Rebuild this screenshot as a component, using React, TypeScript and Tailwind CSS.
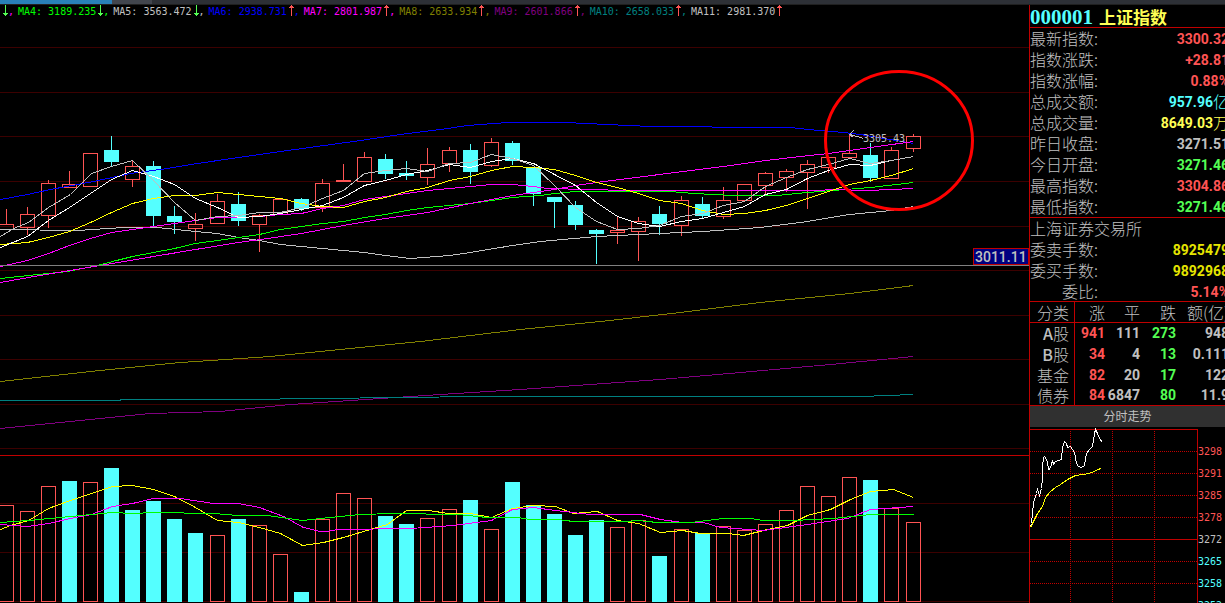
import clsx from "clsx";

type Candle = {
  x: number;
  high: number;
  top: number;
  bottom: number;
  low: number;
  down: boolean;
  volume: number;
};

// x, high, body top, body bottom, low, down day, top of the volume bar
const ROWS: [number, number, number, number, number, 0 | 1, number][] = [
  [6, 209, 224, 229, 229, 0, 505],
  [27, 207, 214, 227, 235, 0, 511],
  [48, 180, 183, 215, 228, 0, 486],
  [69, 171, 184, 187, 187, 0, 481],
  [90, 153, 153, 186, 186, 0, 482],
  [111, 136, 150, 161, 166, 1, 468],
  [132, 161, 166, 179, 187, 0, 510],
  [153, 161, 166, 215, 226, 1, 501],
  [174, 206, 216, 221, 234, 1, 519],
  [195, 213, 224, 228, 241, 0, 533],
  [217, 194, 201, 223, 223, 0, 535],
  [238, 192, 204, 220, 226, 1, 519],
  [259, 214, 215, 224, 252, 0, 525],
  [280, 199, 199, 214, 214, 0, 554],
  [301, 198, 199, 208, 211, 1, 592],
  [322, 179, 183, 207, 212, 0, 519],
  [343, 164, 180, 181, 181, 0, 493],
  [364, 152, 157, 181, 181, 0, 498],
  [385, 154, 159, 173, 179, 1, 516],
  [406, 161, 173, 175, 180, 1, 524],
  [427, 148, 164, 177, 185, 0, 518],
  [449, 147, 150, 163, 172, 0, 509],
  [470, 144, 150, 171, 184, 1, 500],
  [491, 138, 142, 165, 167, 0, 529],
  [512, 141, 143, 160, 165, 1, 482],
  [533, 167, 167, 193, 206, 1, 505],
  [554, 197, 197, 201, 228, 1, 514],
  [575, 201, 205, 224, 230, 1, 535],
  [596, 229, 230, 233, 264, 1, 520],
  [617, 216, 230, 232, 244, 0, 527],
  [638, 217, 221, 231, 261, 0, 520],
  [659, 206, 214, 223, 235, 1, 556],
  [681, 196, 200, 225, 236, 0, 529],
  [702, 197, 204, 215, 218, 1, 533],
  [723, 187, 200, 216, 219, 0, 526],
  [744, 184, 184, 200, 200, 0, 530],
  [765, 172, 173, 185, 194, 0, 524],
  [786, 169, 171, 177, 192, 0, 510],
  [807, 160, 164, 172, 209, 0, 486],
  [828, 157, 157, 167, 173, 0, 496],
  [849, 134, 153, 157, 157, 0, 477],
  [870, 143, 155, 177, 182, 1, 480],
  [891, 147, 150, 178, 178, 0, 508],
  [913, 134, 136, 148, 152, 0, 522],
];

// volume bars that are filled although the day closed up
const FILLED_VOLUME = [69, 132, 195];

const CANDLES: Candle[] = ROWS.map(([x, high, top, bottom, low, down, volume]) => ({
  x,
  high,
  top,
  bottom,
  low,
  down: down === 1,
  volume,
}));

const UP = "#ff5454";
const DOWN = "#54ffff";
const GRID = "#3c0000";
const FRAME = "#c00000";

const PRICE_LINES = [
  {
    color: "#808000",
    points:
      "0,381 90,371 180,362 270,356 380,345 420,341 520,329 600,321 680,312 760,302 850,293 913,285",
  },
  {
    color: "#800080",
    points:
      "0,428 80,420 150,413 220,411 290,404 380,398 440,394 520,389 590,384 660,379 740,372 830,364 913,356",
  },
  { color: "#008080", points: "0,400 240,399 320,398 480,396 640,396 860,396 913,394" },
  {
    color: "#c0c0c0",
    points:
      "0,229 77,230 123,227 157,227 195,231 217,233 238,237 259,240 280,244 322,248 364,252 385,255 410,258 449,255 470,252 512,245 540,241 596,236 638,234 702,231 760,227 807,221 849,214 891,210 913,206",
  },
  {
    color: "#0000ff",
    points:
      "0,199 27,194 50,189 93,181 130,173 167,168 197,163 238,157 280,151 360,140 400,134 440,129 467,125 507,122 565,122 607,124 650,126 690,126 733,127 790,127 808,129 843,132 860,134 913,143",
  },
  {
    color: "#00ff00",
    points:
      "0,278 28,275 67,271 97,265 112,261 132,256 153,252 174,248 195,243 217,240 259,234 280,229 301,226 322,223 343,221 364,217 385,214 406,210 427,207 470,203 512,197 540,195 554,193 575,191 670,191 693,193 733,195 777,195 807,192 870,187 913,182",
  },
  {
    color: "#ff00ff",
    points:
      "0,282 28,277 70,270 112,263 153,256 195,249 238,242 260,239 301,233 343,225 385,218 427,212 470,203 512,195 540,191 554,189 575,185 596,182 659,174 723,166 765,160 800,156 828,153 870,147 913,141",
  },
  {
    color: "#ff00ff",
    points:
      "0,266 27,260 48,253 69,245 90,238 111,232 132,229 153,226 174,223 195,220 217,217 238,217 259,216 280,214 301,213 322,208 343,205 364,199 385,196 406,193 427,190 449,188 470,186 491,184 512,184 533,186 547,188 587,189 627,190 817,190 833,189 867,190 913,188",
  },
  {
    color: "#ffff00",
    points:
      "0,244 27,242 48,237 69,231 90,222 111,212 132,203 153,198 174,195 195,195 217,192 238,194 259,196 280,198 301,203 322,206 343,207 364,201 385,197 406,191 427,187 449,180 470,176 491,170 512,166 533,167 554,169 575,175 596,182 617,187 638,193 659,200 681,203 702,210 723,214 744,213 765,210 786,205 807,198 828,191 849,184 870,180 891,175 913,168",
  },
  {
    color: "#ffffff",
    points:
      "0,247 27,236 48,220 69,207 90,193 111,179 132,170 153,176 174,184 195,198 217,207 238,217 259,216 280,213 301,209 322,205 343,197 364,185 385,180 406,174 427,170 449,164 470,167 491,161 512,158 533,163 554,174 575,185 596,202 617,216 638,223 659,226 681,221 702,218 723,212 744,206 765,194 786,189 807,178 828,170 849,164 870,165 891,160",
  },
  {
    color: "#c0c0c0",
    points:
      "0,236 13,228 28,222 48,207 70,194 91,173 111,166 132,160 153,180 174,202 195,220 217,216 238,215 259,212 280,212 301,207 322,198 343,190 364,173 385,170 406,168 427,171 449,163 470,162 491,154 512,158 533,165 554,185 575,207 596,221 617,229 638,228 659,225 681,216 702,213 723,205 744,201 765,186 786,177 807,169 828,164 849,158 870,163 891,160 913,156",
  },
];

const VOLUME_LINES = [
  {
    color: "#ffff00",
    points:
      "0,529 10,525 28,520 48,508 70,500 91,493 112,486 132,485 153,489 174,496 195,507 217,520 238,522 259,527 280,533 302,545 323,542 343,537 373,528 387,524 406,510 428,510 448,513 470,513 491,517 512,508 533,505 555,506 573,513 597,511 617,520 638,523 660,532 682,530 700,533 727,533 743,535 767,529 787,525 807,515 830,509 850,499 870,491 893,489 913,497",
  },
  {
    color: "#ff00ff",
    points:
      "0,524 27,526 48,523 70,518 91,514 112,506 132,503 153,498 180,498 213,503 238,503 259,507 283,516 303,527 320,531 325,531 338,529 410,528 453,525 491,520 512,509 533,507 555,510 590,514 640,514 660,519 682,522 703,522 720,527 763,530 807,524 847,518 870,509 913,506",
  },
  {
    color: "#00ff00",
    points:
      "0,522 28,520 70,516 112,512 133,513 153,512 213,513 238,515 267,515 302,520 320,518 360,514 393,513 457,514 487,517 517,517 530,519 557,519 573,521 627,521 637,520 657,522 690,522 723,518 750,518 763,520 793,520 833,518 870,514 913,514",
  },
];

const LEGEND = [
  { text: "MA4: 3189.235", rising: false, color: "text-[#00ff00]" },
  { text: "MA5: 3563.472", rising: false, color: "text-[#c0c0c0]" },
  { text: "MA6: 2938.731", rising: true, color: "text-[#0000ff]" },
  { text: "MA7: 2801.987", rising: true, color: "text-[#ff00ff]" },
  { text: "MA8: 2633.934", rising: true, color: "text-[#808000]" },
  { text: "MA9: 2601.866", rising: true, color: "text-[#800080]" },
  { text: "MA10: 2658.033", rising: true, color: "text-[#008080]" },
  { text: "MA11: 2981.370", rising: true, color: "text-[#c0c0c0]" },
];

const QUOTES = [
  { label: "最新指数:", value: "3300.32", color: "text-[#ff5454]" },
  { label: "指数涨跌:", value: "+28.81", color: "text-[#ff5454]" },
  { label: "指数涨幅:", value: "0.88%", color: "text-[#ff5454]" },
  { label: "总成交额:", value: "957.96", unit: "亿", color: "text-[#54ffff]" },
  { label: "总成交量:", value: "8649.03", unit: "万", color: "text-[#ffff54]" },
  { label: "昨日收盘:", value: "3271.51", color: "text-[#c0c0c0]" },
  { label: "今日开盘:", value: "3271.46", color: "text-[#54ff54]" },
  { label: "最高指数:", value: "3304.86", color: "text-[#ff5454]" },
  { label: "最低指数:", value: "3271.46", color: "text-[#54ff54]" },
];

const ORDERS = [
  { label: "委卖手数:", value: "8925479", color: "text-[#e6e600]" },
  { label: "委买手数:", value: "9892968", color: "text-[#e6e600]" },
  { label: "委比:", value: "5.14%", color: "text-[#ff5454]" },
];

const BREADTH = [
  ["A股", "941", "111", "273", "948"],
  ["B股", "34", "4", "13", "0.111"],
  ["基金", "82", "20", "17", "122"],
  ["债券", "84", "6847", "80", "11.9"],
];

const TICKS = [
  { y: 451, text: "3298", color: UP },
  { y: 473, text: "3291", color: UP },
  { y: 495, text: "3285", color: UP },
  { y: 517, text: "3278", color: UP },
  { y: 539, text: "3272", color: "#c0c0c0" },
  { y: 561, text: "3265", color: DOWN },
  { y: 583, text: "3258", color: DOWN },
  { y: 605, text: "3252", color: DOWN },
];

function TrendArrow({ rising }: { rising: boolean }) {
  return (
    <svg
      viewBox="0 0 5 11"
      className={clsx("ml-[2px] h-[11px] w-[5px]", rising ? "text-[#ff5454]" : "rotate-180 text-[#54ff54]")}
      fill="currentColor"
      shapeRendering="crispEdges"
      aria-hidden="true"
    >
      <path d="M2 0h1v11h-1zM1 1h3v2h-3zM0 2h5v1h-5z" />
    </svg>
  );
}

function Legend() {
  return (
    <div className="flex h-[13px] items-start overflow-hidden whitespace-pre pl-px font-['DejaVu_Sans_Mono',monospace] text-[10px] leading-[13px]">
      <TrendArrow rising={false} />
      <span className="w-[10px] text-[#ff00ff]">,</span>
      {LEGEND.map((item, i) => (
        <div key={item.text} className={clsx("flex shrink-0", item.color)}>
          <span>{item.text}</span>
          <TrendArrow rising={item.rising} />
          {i < LEGEND.length - 1 && <span className="w-[10px]">,</span>}
        </div>
      ))}
    </div>
  );
}

function PriceChart() {
  return (
    <svg viewBox="0 18 1029 438" className="block w-full" fill="none" shapeRendering="crispEdges">
      <g transform="translate(0.5 0.5)">
        {[47, 92, 136, 181, 226, 270, 315, 359, 404, 448].map((y) => (
          <path key={y} d={`M-1 ${y}H1029`} stroke={GRID} />
        ))}
        <path d="M-1 455H1029" stroke={FRAME} />
        {CANDLES.map((c) => {
          const color = c.down ? DOWN : UP;
          return (
            <g key={c.x} stroke={color}>
              <path
                d={`M${c.x} ${c.high}V${c.top}M${c.x} ${c.bottom}V${c.low}`}
                transform="translate(0 -0.5)"
              />
              <rect
                x={c.x - 7}
                y={c.top}
                width={14}
                height={c.bottom - c.top}
                fill={c.down ? color : "none"}
              />
            </g>
          );
        })}
        {PRICE_LINES.map((line) => (
          <polyline key={line.points} points={line.points} stroke={line.color} />
        ))}
        <path d="M-1 265H1029" stroke="#808080" />
        <path d="M863 138L850 134M853 130L849 134L853 137" stroke="#c0c0c0" />
      </g>
      <text x="863" y="142" fill="#c0c0c0" className="font-['DejaVu_Sans_Mono',monospace] text-[10px]">
        3305.43
      </text>
      <ellipse
        cx="899"
        cy="140.5"
        rx="73.5"
        ry="69"
        stroke="#ff0000"
        strokeWidth="3"
        shapeRendering="geometricPrecision"
      />
      <rect x="973.5" y="248.5" width="55" height="16" fill="#000080" stroke={FRAME} />
      <text x="975" y="262" fill="#c0c0c0" className="font-[Roboto,sans-serif] text-[14px] font-medium">
        3011.11
      </text>
    </svg>
  );
}

function VolumeChart() {
  return (
    <svg viewBox="0 456 1029 147" className="block w-full" fill="none" shapeRendering="crispEdges">
      <g transform="translate(0.5 0.5)">
        {[503, 552, 601].map((y) => (
          <path key={y} d={`M-1 ${y}H1029`} stroke={GRID} />
        ))}
        {CANDLES.map((c) => {
          const filled = c.down || FILLED_VOLUME.includes(c.x);
          return (
            <rect
              key={c.x}
              x={c.x - 7}
              y={c.volume}
              width={14}
              height={601 - c.volume}
              stroke={filled ? DOWN : UP}
              fill={filled ? DOWN : "none"}
            />
          );
        })}
        {VOLUME_LINES.map((line) => (
          <polyline key={line.color} points={line.points} stroke={line.color} />
        ))}
      </g>
    </svg>
  );
}

function QuoteRow({ label, value, unit, color }: { label: string; value: string; unit?: string; color: string }) {
  return (
    <div className="flex h-[21px] items-start justify-between">
      <dt className="w-[68px] shrink-0 whitespace-nowrap text-right">{label}</dt>
      <dd className={clsx("flex items-start", color)}>
        <span className="font-[Roboto,sans-serif] text-[14px] font-bold leading-[22px]">{value}</span>
        {unit && <span>{unit}</span>}
      </dd>
    </div>
  );
}

function BreadthTable() {
  return (
    <table className="w-full table-fixed border-separate border-spacing-0 text-right leading-[19px]">
      <colgroup>
        <col className="w-[45px]" />
        <col className="w-[30px]" />
        <col className="w-[35px]" />
        <col className="w-[36px]" />
        <col />
      </colgroup>
      <thead>
        <tr className="h-[21px] [&>th]:border-b [&>th]:border-[#c00000] [&>th]:p-0 [&>th]:font-light">
          <th className="border-r">
            <span className="pr-[5px]">分类</span>
          </th>
          <th>涨</th>
          <th>平</th>
          <th>跌</th>
          <th className="whitespace-nowrap">额(亿)</th>
        </tr>
      </thead>
      <tbody>
        {BREADTH.map(([name, up, flat, down, amount]) => (
          <tr
            key={name}
            className="h-[21px] last:h-5 [&>*]:border-[#c00000] [&>*]:p-0 last:[&>*]:border-b [&>td]:font-[Roboto,sans-serif] [&>td]:text-[14px] [&>td]:font-bold"
          >
            <th className={clsx("border-r font-light", /^[AB]/.test(name) && "first-letter:font-medium")}>
              <span className="pr-[5px]">{name}</span>
            </th>
            <td className="text-[#ff5454]">{up}</td>
            <td>{flat}</td>
            <td className="text-[#54ff54]">{down}</td>
            <td>{amount}</td>
          </tr>
        ))}
      </tbody>
    </table>
  );
}

function IntradayChart() {
  return (
    <svg viewBox="1030 427 195 176" className="block w-full" fill="none" shapeRendering="crispEdges">
      {/* dashes start on a whole pixel so that they stay one pixel long */}
      <g stroke={FRAME} strokeDasharray="1 1">
        {[451, 473, 495, 517, 561, 583].map((y) => (
          <path key={y} d={`M1030 ${y}H1197`} transform="translate(0 0.5)" />
        ))}
        {[1070, 1112, 1154].map((x) => (
          <path key={x} d={`M${x} 429V603`} transform="translate(0.5 0)" />
        ))}
      </g>
      <g transform="translate(0.5 0.5)">
        <path d="M1029 429H1197V604M1029 539H1197" stroke={FRAME} />
        <polyline
          stroke="#ffff00"
          points="1030,527 1032,523 1037,513 1042,506 1045,497 1050,491 1055,487 1060,484 1067,479 1075,475 1083,474 1092,472 1097,469 1101,468"
        />
        <polyline
          stroke="#ffffff"
          points="1030,526 1031,523 1032,513 1033,502 1036,493 1037,489 1039,495 1041,488 1042,478 1042,467 1043,457 1044,456 1046,459 1047,462 1048,469 1050,468 1052,460 1053,464 1055,461 1061,459 1062,447 1064,441 1066,443 1067,447 1070,446 1072,449 1074,452 1076,463 1078,466 1081,467 1084,465 1086,453 1089,449 1092,446 1094,433 1095,429 1097,433 1099,438 1102,442"
        />
      </g>
      {TICKS.map((tick) => (
        <text
          key={tick.text}
          x="1198"
          y={tick.y + 4}
          fill={tick.color}
          className="font-['DejaVu_Sans_Mono',monospace] text-[10px]"
        >
          {tick.text}
        </text>
      ))}
    </svg>
  );
}

function QuotePanel() {
  return (
    <aside className="w-[196px] shrink-0 overflow-hidden border-l border-[#c00000] font-['Noto_Sans_CJK_SC',sans-serif] text-[16px] font-light leading-5 text-[#c0c0c0]">
      {/* values run a little past the right edge and are cut off there */}
      <div className="w-[199px]">
        <h1 className="flex h-[23px] items-center gap-1.5 border-b border-[#c00000] pt-0.5 font-bold">
          <span className="font-['Liberation_Serif',serif] text-[21px] text-[#54ffff]">000001</span>
          <span className="text-[17px] text-[#ffff54]">上证指数</span>
        </h1>
        <dl className="border-b border-[#c00000]">
          {QUOTES.map((q) => (
            <QuoteRow key={q.label} {...q} />
          ))}
        </dl>
        <div className="h-[84px] border-b border-[#c00000]">
          <p className="h-[21px]">上海证券交易所</p>
          <dl>
            {ORDERS.map((q) => (
              <QuoteRow key={q.label} {...q} />
            ))}
          </dl>
        </div>
        <BreadthTable />
      </div>
      <h2 className="h-[21px] bg-[#303030] text-center text-[12px] font-normal">分时走势</h2>
      <IntradayChart />
    </aside>
  );
}

export default function App() {
  return (
    <div className="min-h-screen overflow-hidden bg-black">
      <div className="flex h-[5px] border-b border-[#202020] bg-[#2d3036]">
        <div className="w-28 bg-[#2980b9]" />
        <div className="w-10 bg-[#42464e]" />
      </div>
      <div className="flex">
        <main className="min-w-0 flex-1">
          <Legend />
          <PriceChart />
          <VolumeChart />
        </main>
        <QuotePanel />
      </div>
    </div>
  );
}
